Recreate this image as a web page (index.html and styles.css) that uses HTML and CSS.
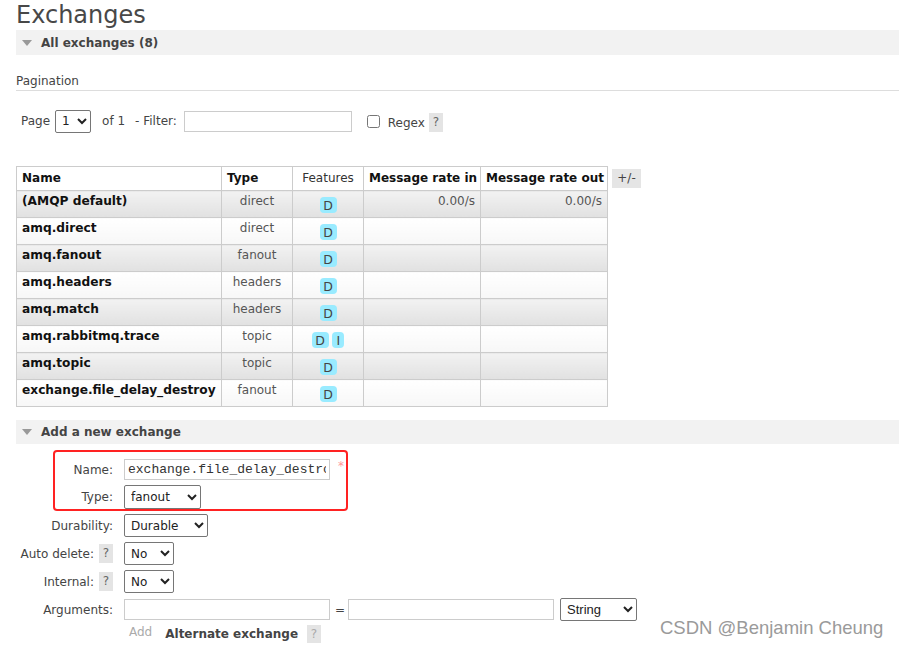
FILE: index.html
```html
<!DOCTYPE html>
<html>
<head>
<meta charset="utf-8">
<link rel="stylesheet" href="styles.css">
</head>
<body>
<div class="page">
  <h1 class="title">Exchanges</h1>
  <div class="section-head"><span class="tri"></span>All exchanges (8)</div>
  <h3 class="pag-title">Pagination</h3>
  <div class="pag-row">
    <span class="lbl-page">Page</span>
    <select class="sel sel-page"><option>1</option></select>
    <span class="of">of 1</span>
    <span class="filter">- Filter:</span>
    <input class="txt filter-input" type="text">
    <input class="chk" type="checkbox">
    <span class="regex">Regex</span>
    <span class="help">?</span>
  </div>
  <div class="table-wrap">
    <table class="list">
      <colgroup>
        <col class="c-name"><col class="c-type"><col class="c-feat"><col class="c-in"><col class="c-out">
      </colgroup>
      <thead>
        <tr><th class="l">Name</th><th class="l">Type</th><th class="reg">Features</th><th>Message rate in</th><th>Message rate out</th></tr>
      </thead>
      <tbody>
        <tr class="odd"><td class="name">(AMQP default)</td><td class="ctr">direct</td><td class="ctr"><abbr class="badge">D</abbr></td><td class="r">0.00/s</td><td class="r">0.00/s</td></tr>
        <tr class="even"><td class="name">amq.direct</td><td class="ctr">direct</td><td class="ctr"><abbr class="badge">D</abbr></td><td></td><td></td></tr>
        <tr class="odd"><td class="name">amq.fanout</td><td class="ctr">fanout</td><td class="ctr"><abbr class="badge">D</abbr></td><td></td><td></td></tr>
        <tr class="even"><td class="name">amq.headers</td><td class="ctr">headers</td><td class="ctr"><abbr class="badge">D</abbr></td><td></td><td></td></tr>
        <tr class="odd"><td class="name">amq.match</td><td class="ctr">headers</td><td class="ctr"><abbr class="badge">D</abbr></td><td></td><td></td></tr>
        <tr class="even"><td class="name">amq.rabbitmq.trace</td><td class="ctr">topic</td><td class="ctr"><abbr class="badge">D</abbr> <abbr class="badge badge-i">I</abbr></td><td></td><td></td></tr>
        <tr class="odd"><td class="name">amq.topic</td><td class="ctr">topic</td><td class="ctr"><abbr class="badge">D</abbr></td><td></td><td></td></tr>
        <tr class="even"><td class="name">exchange.file_delay_destroy</td><td class="ctr">fanout</td><td class="ctr"><abbr class="badge">D</abbr></td><td></td><td></td></tr>
      </tbody>
    </table>
    <span class="plusminus">+/-</span>
  </div>
  <div class="section-head section-add"><span class="tri"></span>Add a new exchange</div>
  <div class="form">
    <label class="flabel">Name:</label>
    <div class="fval"><input class="txt mono w206" type="text" value="exchange.file_delay_destroy"><span class="req">*</span></div>

    <label class="flabel">Type:</label>
    <div class="fval"><select class="sel sel-type"><option>fanout</option></select></div>

    <label class="flabel">Durability:</label>
    <div class="fval"><select class="sel sel-dur"><option>Durable</option></select></div>

    <label class="flabel">Auto delete: <span class="help">?</span></label>
    <div class="fval"><select class="sel sel-no"><option>No</option></select></div>

    <label class="flabel">Internal: <span class="help">?</span></label>
    <div class="fval"><select class="sel sel-no"><option>No</option></select></div>

    <label class="flabel">Arguments:</label>
    <div class="fval"><input class="txt w206" type="text"><span class="eq">=</span><input class="txt w206" type="text"><select class="sel sel-str"><option>String</option></select></div>

    <span class="flabel"></span>
    <div class="fval addrow"><span class="add">Add</span><span class="alt">Alternate exchange</span><span class="help">?</span></div>
  </div>
  <div class="annot"></div>
  <div class="watermark">CSDN @Benjamin Cheung</div>
</div>
</body>
</html>
```
FILE: styles.css
```css
html, body {
  margin: 0;
  padding: 0;
  background: #fff;
}
.page {
  position: relative;
  padding-left: 16px;
  font-family: "DejaVu Sans", Verdana, sans-serif;
  font-size: 12px;
  color: #444;
  width: 883px;
  height: 648px;
  overflow: hidden;
}
.title {
  margin: 0;
  font-size: 24px;
  font-weight: normal;
  line-height: 30px;
  height: 30px;
  color: #484848;
}
.section-head {
  height: 25px;
  background: #f2f2f2;
  display: flex;
  align-items: center;
  font-weight: bold;
  font-size: 12px;
  color: #444;
}
.tri {
  width: 0;
  height: 0;
  border-left: 5px solid transparent;
  border-right: 5px solid transparent;
  border-top: 6px solid #999;
  margin-left: 6px;
  margin-right: 9px;
}
.pag-title {
  margin: 19px 0 0;
  font-size: 12px;
  font-weight: normal;
  line-height: 15px;
  padding-bottom: 1px;
  border-bottom: 1px solid #ddd;
}
.pag-row {
  display: flex;
  align-items: center;
  height: 24px;
  margin-top: 18px;
}
.lbl-page { margin-left: 5px; margin-right: 5px; }
.sel {
  font-family: "DejaVu Sans", Verdana, sans-serif;
  font-size: 12px;
  color: #222;
  border: 1px solid #767676;
  border-radius: 2px;
  background: #fff;
  height: 23px;
  padding: 0 2px;
  margin: 0;
  box-sizing: border-box;
}
.sel-page { width: 36px; height: 23px; }
.of { margin-left: 11px; }
.filter { margin-left: 10px; }
.txt {
  border: 1px solid #ccc;
  height: 21px;
  box-sizing: border-box;
  padding: 0 3px;
  margin: 0;
  font-size: 12px;
}
.filter-input { width: 168px; margin-left: 7px; }
.chk {
  width: 13px;
  height: 13px;
  margin: 0 0 0 15px;
}
.regex { margin-left: 8px; margin-top: 3px; }
.help {
  display: inline-block;
  width: 14px;
  height: 19px;
  line-height: 19px;
  text-align: center;
  background: #e4e4e4;
  color: #666;
  font-weight: normal;
  font-size: 12px;
}
.pag-row .help { margin-left: 4px; margin-top: 3px; }

.table-wrap {
  display: flex;
  align-items: flex-start;
  margin-top: 33px;
}
.list {
  border-collapse: collapse;
  table-layout: fixed;
  width: 592px;
}
.c-name { width: 205px; }
.c-type { width: 71px; }
.c-feat { width: 71px; }
.c-in { width: 117px; }
.c-out { width: 127px; }
.list th, .list td {
  border: 1px solid #ccc;
  font-size: 12px;
  line-height: 15px;
  vertical-align: top;
}
.list th {
  padding: 4px 5px 4px;
  background: #fff;
  font-weight: bold;
  color: #111;
  text-align: center;
  white-space: nowrap;
}
.list th.l { text-align: left; }
.list th.reg { font-weight: normal; color: #333; }
.list td {
  padding: 3px 5px 4px;
  color: #555;
}
.list td.name { font-weight: bold; color: #111; white-space: nowrap; font-size: 12.2px; }
.list td.ctr { text-align: center; }
.list td.r { text-align: right; }
.list tr.odd td { background: linear-gradient(#f2f2f2, #e1e1e1); }
.list tr.even td { background: linear-gradient(#fff, #f7f7f7); }
.badge {
  display: inline-block;
  vertical-align: top;
  margin-top: 3px;
  width: 17px;
  height: 16px;
  line-height: 17px;
  border-radius: 4px;
  background: #99ebff;
  color: #444;
  text-decoration: none;
  text-align: center;
  font-size: 12.5px;
}
.badge-i { width: 12px; }
.plusminus {
  margin-left: 4px;
  margin-top: 3px;
  width: 29px;
  height: 19px;
  line-height: 19px;
  text-align: center;
  background: #e5e5e5;
  color: #444;
}
.section-add { margin-top: 13px; height: 24px; }
.form {
  display: grid;
  grid-template-columns: 102px auto;
  column-gap: 6px;
  row-gap: 5px;
  margin-top: 15px;
  align-items: center;
}
.flabel {
  text-align: right;
  padding-right: 5px;
  color: #444;
  display: flex;
  justify-content: flex-end;
  align-items: center;
  gap: 5px;
}
.fval {
  display: flex;
  align-items: center;
}
.mono {
  font-family: "Liberation Mono", monospace;
  font-size: 13px;
  color: #333;
  padding: 0 3px;
}
.w206 { width: 206px; }
.req {
  color: #f99;
  font-size: 12px;
  margin-left: 8px;
  align-self: flex-start;
}
.sel-type { width: 77px; height: 24px; }
.sel-dur { width: 84px; }
.sel-no { width: 50px; }
.eq { margin: 0 3px 0 5px; color: #444; }
.sel-str {
  width: 77px;
  margin-left: 6px;
  font-family: "Liberation Sans", Arial, sans-serif;
  font-size: 13px;
}
.addrow { padding-left: 5px; height: 18px; margin-top: -1px; align-items: flex-start; }
.add { color: #aaa; line-height: 15px; }
.alt { font-weight: bold; margin-left: 13px; color: #444; font-size: 12px; line-height: 15px; margin-top: 2px; }
.addrow .help { margin-left: 9px; height: 18px; line-height: 18px; color: #aaa; }
.annot {
  position: absolute;
  left: 53px;
  top: 450px;
  width: 291px;
  height: 57px;
  border: 2px solid #f22;
  border-radius: 4px;
}
.watermark {
  position: absolute;
  left: 660px;
  top: 617px;
  font-family: "Liberation Sans", Arial, sans-serif;
  font-size: 18.5px;
  color: #9a9a9a;
}
```
